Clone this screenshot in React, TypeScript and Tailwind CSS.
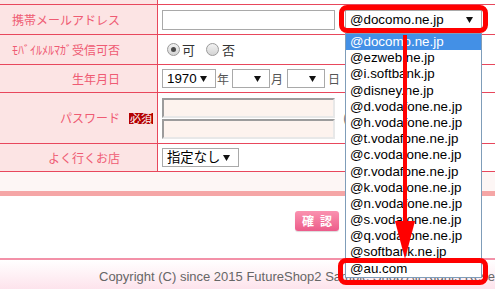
import type { ReactNode } from 'react';

const jp = "font-['Noto_Sans_CJK_JP',sans-serif]";
const arial = "font-['Liberation_Sans','Noto_Sans_CJK_JP',sans-serif]";

const carriers = [
  '@docomo.ne.jp',
  '@ezweb.ne.jp',
  '@i.softbank.jp',
  '@disney.ne.jp',
  '@d.vodafone.ne.jp',
  '@h.vodafone.ne.jp',
  '@t.vodafone.ne.jp',
  '@c.vodafone.ne.jp',
  '@r.vodafone.ne.jp',
  '@k.vodafone.ne.jp',
  '@n.vodafone.ne.jp',
  '@s.vodafone.ne.jp',
  '@q.vodafone.ne.jp',
  '@softbank.ne.jp',
  '@au.com',
];

const Caret = () => (
  <svg width="7" height="6" viewBox="0 0 7 6" className="shrink-0">
    <polygon points="0,0 7,0 3.5,6" fill="#111" />
  </svg>
);

// fake native select box
const SelectBox = ({ value, className }: { value?: string; className: string }) => (
  <div
    className={`flex items-center justify-between border border-[#a9a9a9] bg-white pl-[4px] pr-[8px] text-[13.33px] text-black ${arial} ${className}`}
  >
    <span className="leading-none">{value}</span>
    <Caret />
  </div>
);

const Radio = ({ checked }: { checked?: boolean }) => (
  <span className="flex h-[13px] w-[13px] items-center justify-center rounded-full border border-[#9a9a9a] bg-gradient-to-b from-[#f2f2f2] to-[#d4d4d4]">
    {checked && <span className="h-[5px] w-[5px] rounded-full bg-[#4a4a4a]" />}
  </span>
);

const Row = ({
  label,
  badge,
  h,
  children,
}: {
  label?: string;
  badge?: boolean;
  h: string;
  children?: ReactNode;
}) => (
  <div className={`grid grid-cols-[158px_1fr] border-b border-[#e8475c] ${h}`}>
    <div
      className={`flex items-center justify-end border-r border-[#e8475c] bg-[#fce4e4] text-[12px] text-[#ef5b73] ${jp} ${
        badge ? 'pr-[4px]' : 'pr-[37px]'
      }`}
    >
      <span className="whitespace-nowrap leading-none">{label}</span>
      {badge && (
        <span className="ml-[9px] flex h-[11px] w-[24px] items-center justify-center bg-[#b40000] text-[11px] leading-none text-white">
          必須
        </span>
      )}
    </div>
    <div className="flex items-center pl-[4px]">{children}</div>
  </div>
);

export default function App() {
  return (
    <div className="relative h-[289px] w-[495px] overflow-hidden bg-white">
      {/* form table */}
      <div>
        <Row h="h-[5px]" />

        <Row label="携帯メールアドレス" h="h-[30px]">
          <div className="h-[20px] w-[173px] border border-[#a9a9a9] bg-white" />
          <SelectBox value="@docomo.ne.jp" className="ml-[10px] h-[20px] w-[137px]" />
        </Row>

        <Row label="ﾓﾊﾞｲﾙﾒﾙﾏｶﾞ受信可否" h="h-[30px]">
          <div className={`flex items-center text-[13px] text-[#333] ${jp}`}>
            <span className="ml-[5px]">
              <Radio checked />
            </span>
            <span className="ml-[2px] leading-none">可</span>
            <span className="ml-[11px]">
              <Radio />
            </span>
            <span className="ml-[3px] leading-none">否</span>
          </div>
        </Row>

        <Row label="生年月日" h="h-[28px]">
          <div className={`flex items-center text-[12px] text-[#555] ${jp}`}>
            <SelectBox value="1970" className="h-[19px] w-[54px]" />
            <span className="ml-[1px] leading-none">年</span>
            <SelectBox className="ml-[3px] h-[19px] w-[38px]" />
            <span className="ml-[1px] leading-none">月</span>
            <SelectBox className="ml-[4px] h-[19px] w-[38px]" />
            <span className="ml-[3px] leading-none">日</span>
          </div>
        </Row>

        <Row label="パスワード" badge h="h-[51px]">
          <div className="flex flex-col gap-[1px]">
            <div className="h-[20px] w-[173px] border-[2px] border-b-[#e8e8e8] border-l-[#9c9c9c] border-r-[#e8e8e8] border-t-[#9c9c9c] bg-[#fdf3ee]" />
            <div className="h-[20px] w-[173px] border-[2px] border-b-[#e8e8e8] border-l-[#9c9c9c] border-r-[#e8e8e8] border-t-[#9c9c9c] bg-[#fdf3ee]" />
          </div>
          <span className={`ml-[8px] text-[12px] text-[#666] ${jp}`}>(半角英数字)</span>
        </Row>

        <Row label="よく行くお店" h="h-[28px]">
          <SelectBox value="指定なし" className="h-[19px] w-[77px]" />
        </Row>
      </div>

      <div className="h-[19px] bg-[#fdf6f5]" />
      <div className="h-[5px] bg-[#f5a6a6]" />

      {/* submit area */}
      <div className="h-[62px] bg-white pl-[295px] pt-[15px]">
        <button className="flex h-[20px] w-[44px] items-center justify-center gap-[6px] rounded-[3px] bg-gradient-to-b from-[#fa92b0] to-[#ec5b8a] text-[12px] font-bold leading-none text-white shadow-[0_1px_1px_rgba(0,0,0,0.15)]">
          <span className={jp}>確</span>
          <span className={jp}>認</span>
        </button>
      </div>

      {/* footer */}
      <div className="h-[2px] bg-[#f391a8]" />
      <div className="h-[29px] bg-gradient-to-b from-white to-[#fde3ec] pl-[99px] pt-[9px]">
        <p className={`whitespace-nowrap text-[13px] leading-[16px] text-[#666] ${arial}`}>
          Copyright (C) since 2015 FutureShop2 Sample Shop All Rights Reserved.
        </p>
      </div>

      {/* open dropdown list */}
      <div className={`absolute left-[345px] top-[33px] w-[137px] border border-[#7f9db9] bg-white text-[13.33px] text-black ${arial}`}>
        {carriers.map((c, i) => (
          <div
            key={c}
            className={`h-[16.2px] pl-[4px] leading-[16.2px] ${i === 0 ? 'bg-[#4390e6] text-white' : ''}`}
          >
            {c}
          </div>
        ))}
      </div>

      {/* annotations */}
      <div className="absolute left-[339px] top-[5px] h-[28px] w-[149px] rounded-[8px] border-[5px] border-[#ff0000]" />
      <div className="absolute left-[338px] top-[258px] h-[27px] w-[150px] rounded-[8px] border-[5px] border-[#ff0000]" />
      <svg className="absolute left-[393px] top-[34px]" width="24" height="228" viewBox="0 0 24 228">
        <rect x="10" y="1" width="4" height="188" fill="#ff0000" />
        <polygon points="2,187 22,187 12,225" fill="#ff0000" />
      </svg>
    </div>
  );
}
